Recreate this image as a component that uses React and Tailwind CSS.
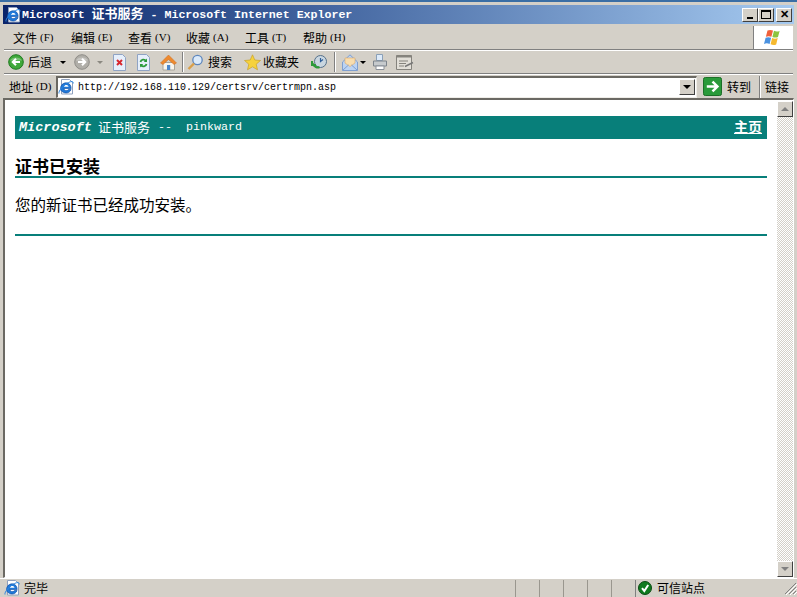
import React from 'react';

const CJK = '"Noto Sans CJK SC", "Liberation Sans", sans-serif';

// Blue "e" logo on a page, used in the title, address and status bars
const IeIcon = ({ className = 'w-4 h-4' }) => (
  <svg viewBox="0 0 16 16" className={className}>
    <path d="M3.500 .5h8l3 3v11.500h-11z" fill="#fff" stroke="#8fa0bd" />
    <path d="M2.500 9.500c0-3.300 2.500-5.700 5.600-5.700 3 0 5.100 2.300 5.100 5.700H6c.1 1.300 1 2.100 2.300 2.100 1 0 1.700-.4 2.200-1.100h2.600c-.8 2.200-2.600 3.500-4.900 3.500-3.300 0-5.700-2.200-5.700-4.500z" fill="#1f78d8" stroke="#0d4aa0" strokeWidth=".6" />
    <path d="M6 7.700h4.500C10.300 6.600 9.400 6 8.200 6 7.100 6 6.200 6.600 6 7.700z" fill="#fff" />
    <path d="M1 14.500C.2 12 5.500 6 10.500 3.500c2.800-1.400 5-1.300 4.800.9" fill="none" stroke="#2b86e0" strokeWidth="1" />
  </svg>
);

const WinFlag = () => (
  <svg viewBox="0 0 22 20" className="w-[22px] h-[20px]">
    <path d="M4.500 2.500c2-.9 3.700-.7 5.500 0l-1.600 6.300c-1.800-.8-3.500-.9-5.500 0z" fill="#f0603a" />
    <path d="M11 2.800c1.900.8 3.600.9 5.600.1L15 9c-1.900.9-3.700.7-5.600-.1z" fill="#8cc43f" />
    <path d="M2.600 9.800c2-.9 3.700-.7 5.500 0l-1.500 6.100c-1.900-.8-3.600-.9-5.600 0z" fill="#4b92e0" />
    <path d="M9.100 10c1.900.8 3.600.9 5.600.1l-1.500 6.300c-2 .8-3.700.6-5.600-.2z" fill="#f5b92f" />
  </svg>
);

const RoundArrow = ({ grey }) => (
  <svg viewBox="0 0 16 16" className="w-4 h-4">
    <circle cx="8" cy="8" r="7.300" fill={grey ? '#b0aea8' : '#3fa83a'} stroke={grey ? '#8f8d88' : '#1e7a20'} />
    <path d="M2 6.500a6.500 5 0 0 1 12 0z" fill="#fff" opacity=".3" />
    {grey ? (
      <path d="M4 8h7M8 4.800 11.300 8 8 11.200" fill="none" stroke="#fff" strokeWidth="2" />
    ) : (
      <path d="M12 8H5M8 4.800 4.700 8 8 11.200" fill="none" stroke="#fff" strokeWidth="2" />
    )}
  </svg>
);

const Caret = ({ light, className = '' }) => (
  <span className={`w-0 h-0 border-x-[3px] border-x-transparent border-t-[3px] ${light ? 'border-t-[#8a8880]' : 'border-t-black'} ${className}`} />
);

const DocIcon = ({ children }) => (
  <svg viewBox="0 0 15 17" className="w-[15px] h-[17px]">
    <path d="M1.500 .5h9l3 3v13h-12z" fill="#e6effb" stroke="#8fa3c4" />
    {children}
  </svg>
);

const HotKey = ({ k }) => (
  <span className="ml-[3px] text-[11px] [font-family:'Liberation_Serif',serif]">({k})</span>
);

const MenuItem = ({ label, hot, width }) => (
  <span className={`flex items-center text-[12px] ${width}`}>
    {label}
    <HotKey k={hot} />
  </span>
);

const Sep = ({ className = '' }) => <span className={`w-[2px] h-[20px] border-l border-[#808080] border-r border-r-white ${className}`} />;

const TitleButton = ({ children }) => (
  <span className="w-4 h-[14px] bg-[#d4d0c8] border-t border-l border-white border-r border-b border-r-[#404040] border-b-[#404040] flex items-center justify-center">
    {children}
  </span>
);

const ScrollButton = ({ up }) => (
  <span className="w-4 h-4 shrink-0 bg-[#d4d0c8] border-t border-l border-white border-r border-b border-r-[#404040] border-b-[#404040] flex items-center justify-center">
    <span className={`w-0 h-0 border-x-[4px] border-x-transparent ${up ? 'border-b-[4px] border-b-[#808080]' : 'border-t-[4px] border-t-[#808080]'}`} />
  </span>
);

const StatusCell = () => <span className="w-[24px] h-[17px] border-l border-[#9a978f]" />;

export default function App() {
  return (
    <div className="w-[797px] h-[597px] overflow-hidden flex flex-col bg-[#d4d0c8] text-black" style={{ fontFamily: CJK }}>
      <div className="h-[2px] shrink-0 bg-[#3a6ea5]" />

      {/* Title bar */}
      <div className="h-[19px] shrink-0 mx-[3px] mt-[3px] flex items-center pl-[2px] pr-[2px] bg-gradient-to-r from-[#0a246a] to-[#a6caf0] text-white">
        <IeIcon className="w-4 h-4 mr-[1px]" />
        <span className="font-bold text-[11.6px] whitespace-pre [font-family:'Liberation_Mono','Noto_Sans_CJK_SC',monospace]">
          Microsoft <span className="text-[13px]">证书服务</span> - Microsoft Internet Explorer
        </span>
        <span className="ml-auto flex items-center">
          <TitleButton><span className="w-[6px] h-[2px] bg-black mt-[6px]" /></TitleButton>
          <TitleButton><span className="w-[10px] h-[9px] border border-black border-t-2" /></TitleButton>
          <span className="ml-[2px]">
            <TitleButton><span className="text-black text-[11px] leading-none font-bold [font-family:'Liberation_Sans',sans-serif]">✕</span></TitleButton>
          </span>
        </span>
      </div>

      {/* Menu bar */}
      <div className="h-[24px] shrink-0 mx-[4px] mt-[2px] flex items-center border-b border-b-[#808080]">
        <div className="flex items-center pl-[9px]">
          <MenuItem label="文件" hot="F" width="w-[58px]" />
          <MenuItem label="编辑" hot="E" width="w-[57px]" />
          <MenuItem label="查看" hot="V" width="w-[58px]" />
          <MenuItem label="收藏" hot="A" width="w-[59px]" />
          <MenuItem label="工具" hot="T" width="w-[58px]" />
          <MenuItem label="帮助" hot="H" width="w-[50px]" />
        </div>
        <div className="ml-auto w-[40px] h-full bg-white border-l border-[#808080] flex items-center justify-center">
          <WinFlag />
        </div>
      </div>

      {/* Standard buttons */}
      <div className="h-[24px] shrink-0 mx-[4px] flex items-center text-[12px] border-t border-white border-b border-b-[#808080] pl-[4px]">
        <RoundArrow />
        <span className="ml-[4px] w-[24px]">后退</span>
        <Caret className="ml-[8px]" />
        <span className="ml-[8px]"><RoundArrow grey /></span>
        <Caret light className="ml-[7px]" />
        <span className="ml-[9px]">
          <DocIcon><path d="M5 6l5 5M10 6l-5 5" stroke="#d8262c" strokeWidth="2" /></DocIcon>
        </span>
        <span className="ml-[9px]">
          <DocIcon>
            <path d="M4.500 8a3 3 0 0 1 5.500-1M10.500 10a3 3 0 0 1-5.500 1" fill="none" stroke="#2a9a3a" strokeWidth="1.800" />
            <path d="M11 4.500v3.500H7.800zM4 13.500V10h3.200z" fill="#2a9a3a" />
          </DocIcon>
        </span>
        <svg viewBox="0 0 17 17" className="ml-[9px] w-[17px] h-[17px]">
          <path d="M3 8.500h11.500V16H3z" fill="#f7f5ee" stroke="#a8a49a" />
          <path d="M8.500 1 .5 9l2.500 1.500L8.500 5.500l5.500 5L16.500 9z" fill="#ee8a2e" stroke="#c9691e" strokeWidth=".5" />
          <path d="M7 11h3.200v5H7z" fill="#4a86cc" />
        </svg>
        <Sep className="ml-[5px]" />
        <svg viewBox="0 0 17 17" className="ml-[3px] w-[17px] h-[17px]">
          <circle cx="10.500" cy="6" r="4.700" fill="#dbeafa" stroke="#5d86bd" strokeWidth="1.300" />
          <path d="M7 9.500 1.500 15" stroke="#d99f4a" strokeWidth="2.400" />
        </svg>
        <span className="ml-[4px] w-[24px]">搜索</span>
        <svg viewBox="0 0 17 17" className="ml-[12px] w-[17px] h-[17px]">
          <path d="M8.500 .8l2.300 5.200 5.700.5-4.300 3.700 1.300 5.600-5-3-5 3 1.300-5.600L.5 6.500l5.700-.5z" fill="#f6d23c" stroke="#c9a227" strokeWidth=".7" />
        </svg>
        <span className="ml-[2px] w-[36px]">收藏夹</span>
        <svg viewBox="0 0 16 16" className="ml-[12px] w-4 h-4">
          <circle cx="9.500" cy="7.500" r="6" fill="#c9d6e0" stroke="#55708a" />
          <path d="M9.500 4v3.500L12 5.500" fill="none" stroke="#2f5f9a" strokeWidth="1.200" />
          <path d="M1.500 9.500c1.500 3.500 5 4.500 7 3.500M1 7v4h4" fill="none" stroke="#2d9a3a" strokeWidth="2.200" />
        </svg>
        <Sep className="ml-[7px]" />
        <svg viewBox="0 0 16 17" className="ml-[6px] w-4 h-[17px]">
          <path d="M.5 8 8 .8 15.500 8v8.500H.5z" fill="#bcd3f2" stroke="#7f9fd0" />
          <path d="M3 9V4h10v5l-5 3.500z" fill="#f8ddae" stroke="#dca868" strokeWidth=".6" />
          <path d="M.8 16.200 6.500 11M15.200 16.200 9.500 11" fill="none" stroke="#7f9fd0" />
        </svg>
        <Caret className="ml-[2px]" />
        <svg viewBox="0 0 16 16" className="ml-[6px] w-4 h-4">
          <path d="M4.500 .5h6v6h-6z" fill="#dceafa" stroke="#8aa0b8" />
          <path d="M1.500 7h13v5h-13z" fill="#c6cacd" stroke="#7d848c" />
          <path d="M4 12h8v3.500H4z" fill="#fff" stroke="#8a9098" />
        </svg>
        <svg viewBox="0 0 18 15" className="ml-[8px] w-[18px] h-[15px]">
          <path d="M.5 .5h15v14H.5z" fill="#e2dfd8" stroke="#85837d" />
          <path d="M.5 .5h15v2H.5z" fill="#85837d" />
          <path d="M3 6h9M3 8.500h7M3 11h5" stroke="#85837d" />
          <path d="M9 11.500l8-4" stroke="#777" strokeWidth="1.500" />
        </svg>
      </div>

      {/* Address bar */}
      <div className="h-[24px] shrink-0 mx-[4px] flex items-center text-[12px] border-t border-white">
        <span className="ml-[5px] w-[47px] flex items-center">
          地址
          <HotKey k="D" />
        </span>
        <div className="w-[641px] h-[22px] bg-white border-t-2 border-l-2 border-[#6b6963] border-b border-r border-b-[#efede8] border-r-[#efede8] flex items-center pl-[0px]">
          <IeIcon className="w-4 h-4" />
          <span className="ml-[4px] text-[10px] [font-family:'Liberation_Mono',monospace]">http://192.168.110.129/certsrv/certrmpn.asp</span>
          <span className="ml-auto w-4 h-4 mr-[1px] bg-[#d4d0c8] border-t border-l border-white border-r border-b border-r-[#404040] border-b-[#404040] flex items-center justify-center">
            <span className="w-0 h-0 border-x-[4px] border-x-transparent border-t-[4px] border-t-black" />
          </span>
        </div>
        <svg viewBox="0 0 20 20" className="ml-[6px] w-[19px] h-[19px]">
          <rect x=".5" y=".5" width="19" height="19" rx="2" fill="#2a9a3a" stroke="#166a22" />
          <path d="M4 10h11M10 4.800 15.200 10 10 15.200" fill="none" stroke="#fff" strokeWidth="2.600" />
        </svg>
        <span className="ml-[5px] w-[32px]">转到</span>
        <Sep className="!h-[22px]" />
        <span className="ml-[4px]">链接</span>
      </div>

      {/* Page area */}
      <div className="flex-1 min-h-0 ml-[3px] mr-[3px] flex border-t-2 border-l-2 border-[#6b6963] border-b border-b-white border-r border-r-white bg-white">
        <main className="flex-1 pl-[10px] pr-[10px] pt-[16px]">
          <div className="h-[23px] bg-[#087f7a] text-white flex items-center pl-[4px] pr-[5px] text-[13px]">
            <span className="mt-[2px] font-bold italic text-[13.500px] [font-family:'Liberation_Mono',monospace]">Microsoft</span>
            <span className="ml-[6px] mb-[2px]">证书服务</span>
            <span className="ml-[8px] whitespace-pre text-[11.670px] [font-family:'Liberation_Mono',monospace]">--  pinkward</span>
            <a className="ml-auto mb-[2px] font-bold underline text-[14px]">主页</a>
          </div>
          <h1 className="mt-[17px] h-[20px] leading-[19px] font-bold text-[17px] border-b-2 border-[#087f7a] box-content">证书已安装</h1>
          <p className="mt-[16px] text-[15.500px] leading-[20px]">您的新证书已经成功安装。</p>
          <div className="mt-[20px] h-[2px] bg-[#087f7a]" />
        </main>
        <div className="w-4 shrink-0 flex flex-col border-t border-white bg-[repeating-conic-gradient(#d4d0c8_0%_25%,#ffffff_0%_50%)] bg-[length:2px_2px]">
          <ScrollButton up />
          <div className="flex-1" />
          <ScrollButton />
        </div>
      </div>

      {/* Status bar */}
      <div className="h-[19px] shrink-0 flex items-center text-[12px] pl-[4px] border-t border-white">
        <IeIcon className="w-4 h-4" />
        <span className="ml-[4px] w-[491px]">完毕</span>
        <StatusCell /><StatusCell /><StatusCell /><StatusCell /><StatusCell />
        <span className="h-[17px] flex-1 border-l border-[#808080] flex items-center pl-[2px]">
          <svg viewBox="0 0 14 14" className="w-[14px] h-[14px]">
            <circle cx="7" cy="7" r="6.500" fill="#0f7a1e" stroke="#0a4a12" />
            <path d="M4 7.200 6.300 10 10.200 4" fill="none" stroke="#fff" strokeWidth="2" />
          </svg>
          <span className="ml-[5px]">可信站点</span>
          <svg viewBox="0 0 13 13" className="ml-auto w-[13px] h-[13px]">
            <path d="M12 1 1 12M12 5 5 12M12 9 9 12" stroke="#808080" />
            <path d="M13 2 2 13M13 6 6 13M13 10 10 13" stroke="#fff" />
          </svg>
        </span>
      </div>
    </div>
  );
}
